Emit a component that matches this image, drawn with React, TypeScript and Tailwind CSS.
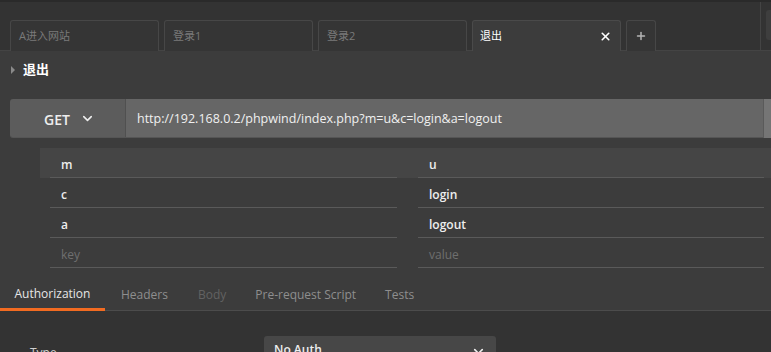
import React from 'react';
import { X, Plus, ChevronDown } from 'lucide-react';

const font = { fontFamily: '"Open Sans", "Noto Sans CJK SC", sans-serif' };

const tabs = ['A进入网站', '登录1', '登录2'];

const params = [
  { k: 'm', v: 'u' },
  { k: 'c', v: 'login' },
  { k: 'a', v: 'logout' },
];

function ParamRow({ k, v, active, placeholder }: { k: string; v: string; active?: boolean; placeholder?: boolean }) {
  const text = placeholder ? 'text-[#6f6f6f] font-normal' : 'text-[#eeeeee] font-semibold';
  return (
    <div className={`flex h-[30px] pl-[10px] ${active ? 'bg-[#454545]' : ''}`}>
      <div className={`w-[347px] border-b border-[#5a5a5a] flex items-center pl-[11px] pt-[4px] text-[12px] ${text}`}>{k}</div>
      <div className="w-[21px]" />
      <div className={`w-[346px] border-b border-[#5a5a5a] flex items-center pl-[11px] pt-[4px] text-[12px] ${text}`}>{v}</div>
    </div>
  );
}

export default function App() {
  return (
    <div className="w-[771px] h-[352px] overflow-hidden bg-[#3c3c3c]" style={font}>
      {/* tab bar */}
      <div className="h-[51px] bg-[#333333] border-t-2 border-[#2a2a2a] border-b border-b-[#444444] flex relative">
        <div className="flex items-end gap-[5px] pl-[10px] pt-[18px] flex-1">
          {tabs.map((t) => (
            <div
              key={t}
              className="w-[149px] h-[31px] -mb-px rounded-t-[3px] border border-b-0 border-[#474747] bg-[#353535] flex items-center pl-[8px] text-[11px] text-[#7a7a7a]"
            >
              {t}
            </div>
          ))}
          <div className="w-[149px] h-[31px] -mb-px rounded-t-[3px] border border-b-0 border-[#4a4a4a] bg-[#3c3c3c] flex items-center justify-between pl-[7px] pr-[8px] text-[11px] text-white">
            <span>退出</span>
            <X size={13} strokeWidth={3} className="text-white" />
          </div>
          <div className="w-[30px] h-[31px] -mb-px rounded-t-[3px] border border-b-0 border-[#474747] bg-[#353535] flex items-center justify-center">
            <Plus size={12} strokeWidth={3} className="text-[#b5b5b5]" />
          </div>
        </div>
        <div className="w-px bg-[#444444] mr-[10px]" />
        <div className="absolute right-0 top-[8px] w-[5px] h-[30px] rounded-l-[3px] bg-[#3e3e3e]" />
      </div>

      {/* title */}
      <div className="h-[48px] flex items-start pt-[9px] pl-[11px] gap-[8px]">
        <span className="mt-[6px] w-0 h-0 border-y-[4px] border-y-transparent border-l-[4px] border-l-[#8a8a8a]" />
        <span className="text-[13px] font-bold text-white">退出</span>
      </div>

      {/* url bar */}
      <div className="flex h-[39px] ml-[10px]">
        <div className="flex flex-1 rounded-l-[3px] overflow-hidden border-b border-[#555]">
          <div className="w-[116px] bg-[#5c5c5c] border-r border-[#505050] flex items-center pl-[34px] pt-[3px] gap-[10px]">
            <span className="text-[14px] font-semibold text-[#eeeeee]">GET</span>
            <ChevronDown size={15} strokeWidth={2.5} className="text-[#eeeeee] -mt-[3px]" />
          </div>
          <div className="flex-1 bg-[#666666] flex items-center pl-[11px] pt-[3px] text-[12.5px] text-[#f0f0f0]">
            http://192.168.0.2/phpwind/index.php?m=u&amp;c=login&amp;a=logout
          </div>
        </div>
        <div className="w-[8px] bg-[#757575] border-l border-[#5a5a5a]" />
      </div>

      {/* params */}
      <div className="pt-[10px] pl-[40px]">
        {params.map((p, i) => (
          <ParamRow key={p.k} k={p.k} v={p.v} active={i === 0} />
        ))}
        <ParamRow k="key" v="value" placeholder />
      </div>

      {/* request tabs */}
      <div className="mt-[11px] h-[32px] flex items-stretch border-b border-[#4c4c4c] text-[12px]">
        <div className="w-[105px] flex items-center justify-center text-[#e6e6e6] border-b-[3px] border-[#f26b21] -mb-px">Authorization</div>
        <div className="flex items-center pl-[16px] text-[#8e8e8e]">Headers</div>
        <div className="flex items-center pl-[30px] text-[#626262]">Body</div>
        <div className="flex items-center pl-[29px] text-[#8e8e8e]">Pre-request Script</div>
        <div className="flex items-center pl-[29px] text-[#8e8e8e]">Tests</div>
      </div>

      {/* auth */}
      <div className="bg-[#333333] h-[60px] flex pt-[25px]">
        <div className="w-[264px] pl-[30px] pt-[8px] text-[12px] text-[#d0d0d0]">Type</div>
        <div className="w-[232px] h-[40px] rounded-[3px] bg-[#474747] flex items-start justify-between pl-[10px] pr-[10px] pt-[5px]">
          <span className="text-[12px] font-semibold text-[#eeeeee]">No Auth</span>
          <ChevronDown size={15} strokeWidth={2.5} className="text-[#eeeeee] mt-[3px]" />
        </div>
      </div>
    </div>
  );
}
